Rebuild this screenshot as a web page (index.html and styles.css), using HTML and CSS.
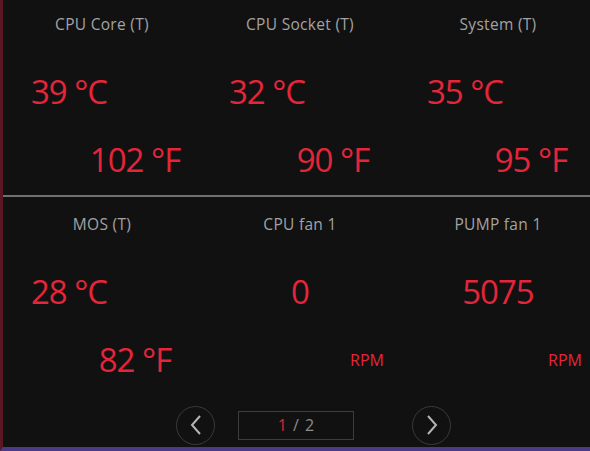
FILE: index.html
```html
<!DOCTYPE html>
<html>
<head>
<meta charset="utf-8">
<link rel="stylesheet" href="styles.css">
</head>
<body>
<div class="frame">
  <div class="section section-top">
    <div class="cell">
      <div class="label">CPU Core (T)</div>
      <div class="val c">39 °C</div>
      <div class="val f">102 °F</div>
    </div>
    <div class="cell">
      <div class="label">CPU Socket (T)</div>
      <div class="val c">32 °C</div>
      <div class="val f">90 °F</div>
    </div>
    <div class="cell">
      <div class="label">System (T)</div>
      <div class="val c">35 °C</div>
      <div class="val f">95 °F</div>
    </div>
  </div>
  <div class="divider"></div>
  <div class="section section-bottom">
    <div class="cell">
      <div class="label">MOS (T)</div>
      <div class="val c">28 °C</div>
      <div class="val f">82 °F</div>
    </div>
    <div class="cell">
      <div class="label">CPU fan 1</div>
      <div class="val rpmval">0</div>
      <div class="unit">RPM</div>
    </div>
    <div class="cell">
      <div class="label">PUMP fan 1</div>
      <div class="val rpmval">5075</div>
      <div class="unit">RPM</div>
    </div>
  </div>
  <div class="nav">
    <div class="circle prev">
      <svg width="14" height="22" viewBox="0 0 14 22"><path d="M11 2 L3 11 L11 20" fill="none" stroke="#b5b5b5" stroke-width="2"/></svg>
    </div>
    <div class="pager"><span class="cur">1</span> / 2</div>
    <div class="circle next">
      <svg width="14" height="22" viewBox="0 0 14 22"><path d="M3 2 L11 11 L3 20" fill="none" stroke="#b5b5b5" stroke-width="2"/></svg>
    </div>
  </div>
</div>
</body>
</html>
```
FILE: styles.css
```css
html, body {
  margin: 0;
  padding: 0;
  background: #111111;
}
.frame {
  width: 587px;
  height: 447px;
  border-left: 3px solid #5a1823;
  border-bottom: 4px solid #4b3a86;
  background: #111111;
  font-family: "Open Sans", "Noto Sans", sans-serif;
  overflow: hidden;
}
.section {
  display: grid;
  grid-template-columns: 198px 198px 191px;
}
.section-top {
  height: 181px;
  padding-top: 14px;
}
.section-bottom {
  height: 190px;
  padding-top: 17px;
}
.divider {
  height: 2px;
  background: #717171;
}
.cell {
  display: grid;
  grid-template-columns: 66px 66px 66px;
  grid-template-rows: 20px 78px 68px;
  align-content: start;
}
.label {
  grid-column: 1 / 4;
  text-align: center;
  color: #a3a3a3;
  font-size: 15.5px;
  letter-spacing: 0.3px;
  line-height: 20px;
  white-space: nowrap;
}
.val {
  align-self: end;
  color: #e4253a;
  font-size: 33px;
  letter-spacing: -1px;
  line-height: 40px;
  text-align: center;
  white-space: nowrap;
}
.c {
  grid-row: 2;
  grid-column: 1 / 3;
}
.f {
  grid-row: 3;
  grid-column: 2 / 4;
}
.rpmval {
  grid-row: 2;
  grid-column: 1 / 4;
}
.unit {
  grid-row: 3;
  grid-column: 3;
  align-self: end;
  color: #e4253a;
  font-size: 16px;
  line-height: 40px;
  text-align: center;
  justify-self: center;
  white-space: nowrap;
  margin-left: 2px;
}
.nav {
  display: flex;
  align-items: center;
  height: 40px;
  padding-left: 173px;
  padding-top: 1px;
}
.circle {
  width: 37px;
  height: 37px;
  border: 1.5px solid #3a3a3a;
  border-radius: 50%;
  display: flex;
  align-items: center;
  justify-content: center;
}
.pager {
  width: 114px;
  height: 27px;
  margin-left: 23px;
  margin-right: 58px;
  border: 1.5px solid #3d3d3d;
  color: #8c8c8c;
  font-size: 16px;
  word-spacing: 2px;
  line-height: 27px;
  text-align: center;
}
.cur {
  color: #d8263a;
}
```
